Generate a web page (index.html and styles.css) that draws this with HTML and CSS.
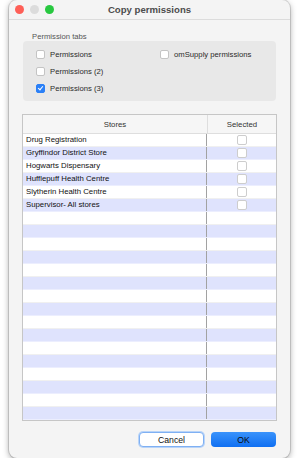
FILE: index.html
```html
<!DOCTYPE html>
<html lang="en">
<head>
    <meta charset="UTF-8" />
    <meta name="viewport" content="width=device-width, initial-scale=1.0" />
    <title>Copy permissions</title>
    <link rel="stylesheet" href="styles.css">
</head>
<body>
    <div class="window">
        <div class="titlebar">
            <div class="lights">
                <span class="light red"></span>
                <span class="light gray"></span>
                <span class="light green"></span>
            </div>
            <div class="title">Copy permissions</div>
        </div>

        <div class="content">
            <div class="group-label">Permission tabs</div>
            <div class="group">
                <label class="check"><span class="box"></span>Permissions</label>
                <label class="check"><span class="box"></span>omSupply permissions</label>
                <label class="check"><span class="box"></span>Permissions (2)</label>
                <span></span>
                <label class="check"><span class="box on"></span>Permissions (3)</label>
            </div>

            <div class="table">
                <div class="head">
                    <div class="cell name">Stores</div>
                    <div class="cell sel">Selected</div>
                </div>
                <div class="rows" id="rows"></div>
            </div>

            <div class="buttons">
                <button class="btn cancel">Cancel</button>
                <button class="btn ok">OK</button>
            </div>
        </div>
    </div>

    <script>
        const stores = [
            "Drug Registration",
            "Gryffindor District Store",
            "Hogwarts Dispensary",
            "Hufflepuff Health Centre",
            "Slytherin Health Centre",
            "Supervisor- All stores"
        ];
        const rows = document.getElementById("rows");
        for (let i = 0; i < 22; i++) {
            const row = document.createElement("div");
            row.className = "row";
            const name = document.createElement("div");
            name.className = "cell name";
            const sel = document.createElement("div");
            sel.className = "cell sel";
            if (i < stores.length) {
                name.textContent = stores[i];
                sel.innerHTML = '<span class="mini"></span>';
            }
            row.appendChild(name);
            row.appendChild(sel);
            rows.appendChild(row);
        }
    </script>
</body>
</html>
```

FILE: styles.css
```css
body {
    margin: 0;
    padding: 0 10px 0 9px;
    background: #ffffff;
    font-family: 'Liberation Sans', Arial, sans-serif;
    color: #1e1e1e;
}

.window {
    height: 458px;
    background: #f4f4f4;
    border-radius: 8px;
    box-shadow: 0 2px 6px rgba(0, 0, 0, 0.35), 0 0 0 1px rgba(0, 0, 0, 0.12);
    display: flex;
    flex-direction: column;
}

.titlebar {
    height: 19px;
    border-bottom: 1px solid #dcdcdc;
    display: flex;
    align-items: center;
    position: relative;
}

.lights {
    display: flex;
    gap: 6px;
    padding-left: 6px;
}

.light {
    width: 9px;
    height: 9px;
    border-radius: 50%;
}

.light.red { background: #fe5f57; }
.light.gray { background: #dcdcdc; }
.light.green { background: #28c840; }

.title {
    position: absolute;
    left: 0;
    right: 0;
    text-align: center;
    font-size: 9.6px;
    font-weight: bold;
    color: #4c4c4c;
}

.content {
    flex-grow: 1;
    display: flex;
    flex-direction: column;
    padding: 0 13px;
}

.group-label {
    margin-top: 12px;
    padding-left: 10px;
    font-size: 7.7px;
    line-height: 9px;
    color: #555;
}

.group {
    margin: 0 1px;
    background: #e8e8e8;
    border-radius: 4px;
    height: 60px;
    box-sizing: border-box;
    padding: 5px 0 4px 13px;
    display: grid;
    grid-template-columns: 124px 1fr;
    grid-auto-rows: 17px;
}

.check {
    display: flex;
    align-items: center;
    gap: 5px;
    font-size: 7.7px;
    color: #2a2a2a;
}

.box {
    width: 7px;
    height: 7px;
    background: #fff;
    border: 1px solid #c4c4c4;
    border-radius: 2px;
    position: relative;
}

.box.on {
    background: #2b80f7;
    border-color: #2b80f7;
}

.box.on::after {
    content: "";
    position: absolute;
    left: 2px;
    top: 0;
    width: 2px;
    height: 4px;
    border: solid #fff;
    border-width: 0 1.3px 1.3px 0;
    transform: rotate(40deg);
}

.table {
    margin-top: 13px;
    border: 1px solid #c6c6c6;
    background: #fff;
}

.head {
    display: flex;
    height: 18px;
    border-bottom: 1px solid #dedede;
    background: #f6f6f6;
    font-size: 7.8px;
    color: #333;
}

.head .cell {
    display: flex;
    align-items: center;
    justify-content: center;
}

.cell.name {
    width: 184px;
    border-right: 1px solid #a2a2a2;
}

.head .cell.name {
    border-right-color: #dedede;
}

.cell.sel {
    flex-grow: 1;
    display: flex;
    align-items: center;
    justify-content: center;
}

.row {
    display: flex;
    height: 13px;
    font-size: 7.8px;
    border-bottom: 1px solid #f0f0f0;
    box-sizing: border-box;
}

.row:nth-child(even) {
    background: #dfe3fd;
    border-bottom-color: #eceefe;
}

.row .cell.name {
    padding-left: 3px;
    box-sizing: border-box;
    line-height: 12px;
    color: #111;
}

.mini {
    width: 8px;
    height: 8px;
    background: #fff;
    border: 1px solid #cdcdcd;
    border-radius: 2px;
}

.buttons {
    margin-top: 11px;
    display: flex;
    justify-content: flex-end;
    gap: 7px;
    padding-right: 1px;
}

.btn {
    width: 65px;
    height: 15px;
    border-radius: 4px;
    font-family: 'Liberation Sans', Arial, sans-serif;
    font-size: 8.7px;
    padding: 0;
    color: #111;
}

.btn.cancel {
    background: #fff;
    border: 1.5px solid #7fb0f3;
    box-shadow: 0 0 0 1px #b9d4f8;
}

.btn.ok {
    background: linear-gradient(#3a93fb, #0f6ff2);
    border: none;
    color: #0a0a0a;
}
```
